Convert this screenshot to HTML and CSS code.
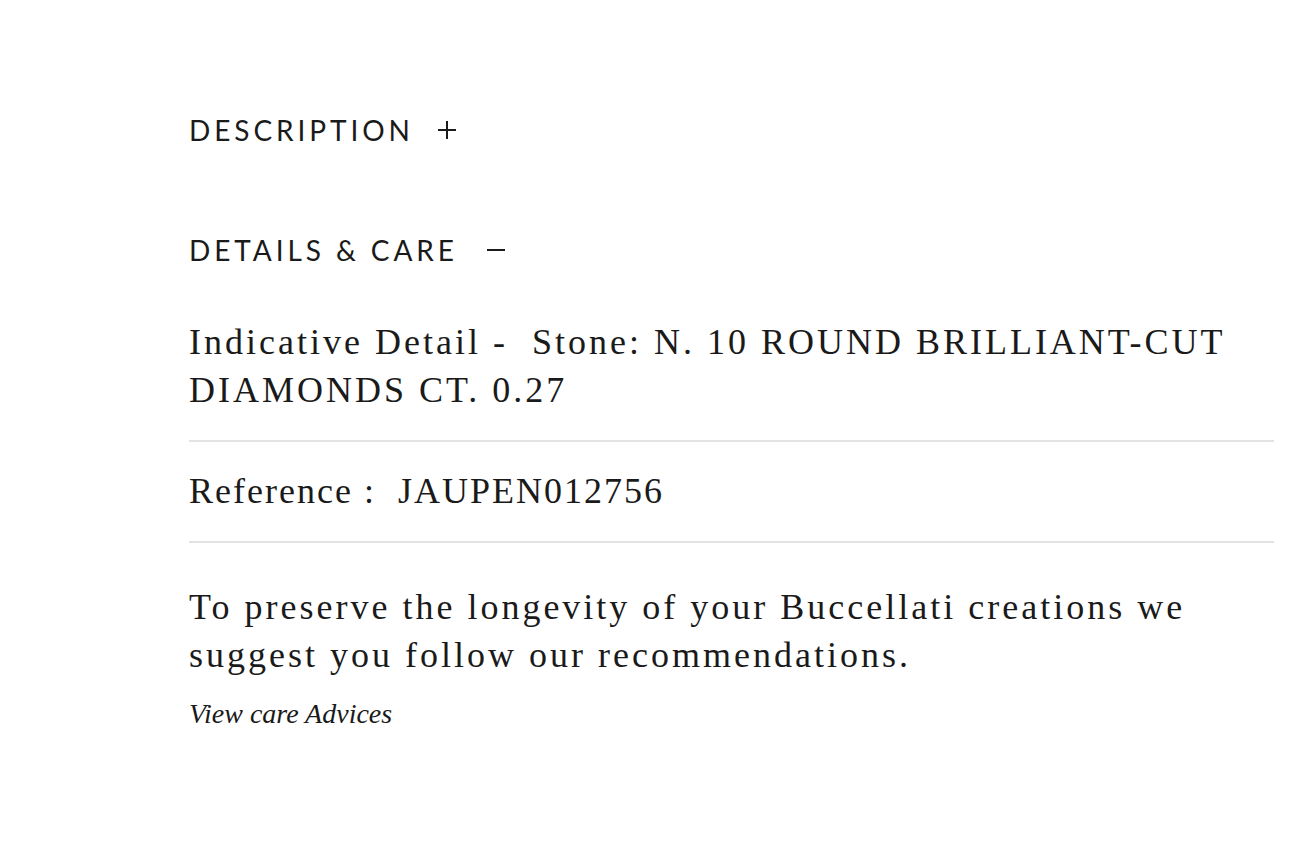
FILE: index.html
```html
<!DOCTYPE html>
<html lang="en">
<head>
    <meta charset="UTF-8">
    <title>Details &amp; Care</title>
    <link rel="stylesheet" href="styles.css">
</head>
<body>
    <div class="accordion">
        <div class="acc-item">
            <div class="acc-head">
                <span class="acc-title">Description</span>
                <svg class="acc-icon" width="20" height="20" viewBox="0 0 20 20">
                    <path d="M10 1v18M1 10h18" stroke="#1a1a1a" stroke-width="2" fill="none"/>
                </svg>
            </div>
        </div>

        <div class="acc-item open">
            <div class="acc-head">
                <span class="acc-title">Details &amp; Care</span>
                <svg class="acc-icon" width="20" height="20" viewBox="0 0 20 20">
                    <path d="M1 10h18" stroke="#1a1a1a" stroke-width="2" fill="none"/>
                </svg>
            </div>
            <div class="acc-body">
                <div class="detail-row">Indicative Detail - &nbsp;Stone: N. 10 ROUND BRILLIANT-CUT DIAMONDS CT. 0.27</div>
                <div class="detail-row ref-row">Reference : &nbsp;JAUPEN012756</div>
                <p class="care-text">To preserve the longevity of your Buccellati creations we suggest you follow our recommendations.</p>
                <a class="care-link" href="#">View care Advices</a>
            </div>
        </div>
    </div>
</body>
</html>
```

FILE: styles.css
```css
*{
    margin: 0;
    padding: 0;
    border: none;
}

body{
    background: #fff;
    color: #1a1a1a;
    padding: 112px 0 0 189px;
}

.accordion{
    width: 1085px;
}

.acc-item{
    margin-bottom: 84px;
}

.acc-head{
    display: flex;
    align-items: center;
    gap: 23px;
    height: 36px;
}

.acc-title{
    font-family: Lato, "Open Sans", sans-serif;
    font-size: 28px;
    line-height: 36px;
    font-weight: 400;
    text-transform: uppercase;
    letter-spacing: 0.14em;
}

.open .acc-icon{
    margin-left: 5px;
}

.acc-body{
    margin-top: 50px;
    font-family: "Liberation Serif", "DejaVu Serif", serif;
}

.detail-row{
    font-size: 36px;
    line-height: 48px;
    letter-spacing: 3px;
    padding: 25px 0 26px;
    border-bottom: 2px solid #e3e3e3;
}

.detail-row:first-child{
    padding-top: 0;
}

.ref-row{
    letter-spacing: 2px;
}

.care-text{
    font-size: 36px;
    line-height: 48px;
    letter-spacing: 3px;
    margin-top: 40px;
}

.care-link{
    display: inline-block;
    margin-top: 17px;
    font-size: 28px;
    line-height: 36px;
    font-style: italic;
    color: #1a1a1a;
    text-decoration: none;
}
```
